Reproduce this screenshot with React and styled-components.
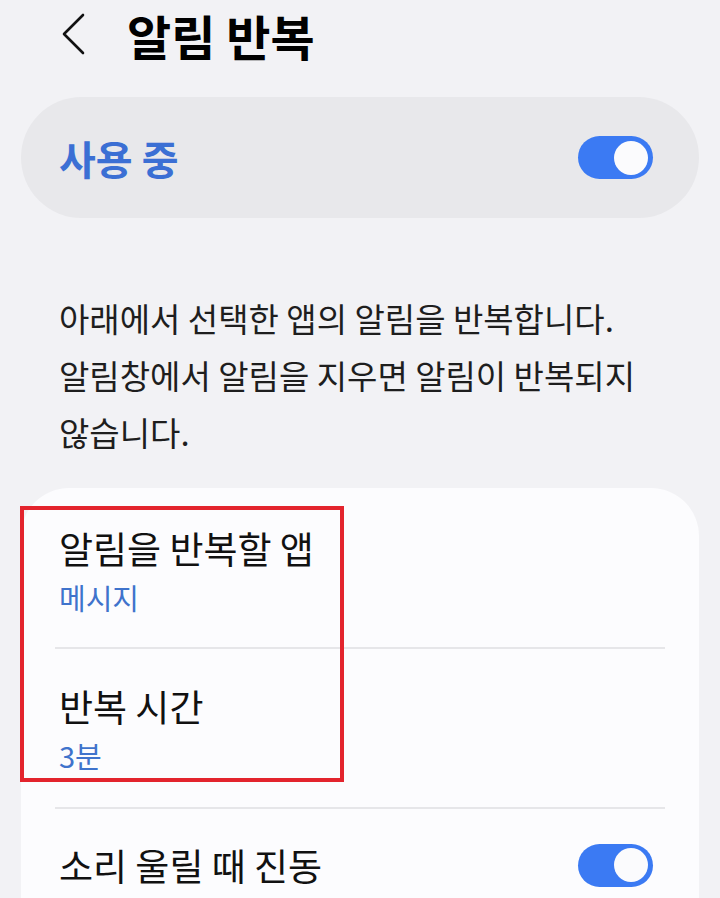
import React from "react"
import styled, { createGlobalStyle } from "styled-components"

const GlobalStyle = createGlobalStyle`
  html, body {
    margin: 0;
    padding: 0;
    background: #f2f2f5;
  }
  body {
    font-family: "Noto Sans CJK KR", "Noto Sans", sans-serif;
    color: #111;
    word-break: keep-all;
  }
`

const Page = styled.div`
  width: 720px;
  height: 898px;
  overflow: hidden;
  background: #f2f2f5;
`

const Header = styled.header`
  display: flex;
  align-items: center;
  height: 64px;
  padding: 3px 0 0 58px;
  gap: 37px;
`

const BackButton = styled.button`
  display: flex;
  align-items: center;
  justify-content: center;
  width: 32px;
  height: 44px;
  margin-top: -3px;
  padding: 0;
  border: 0;
  background: none;
  cursor: pointer;
`

const Title = styled.h1`
  margin: 0;
  font-size: 48px;
  font-weight: 700;
  line-height: 58px;
  color: #000;
`

const MasterSwitch = styled.div`
  display: flex;
  align-items: center;
  justify-content: space-between;
  height: 121px;
  margin: 30px 21px 0;
  padding: 0 46px 0 38px;
  border-radius: 61px;
  background: #e8e8eb;
`

const MasterLabel = styled.span`
  font-size: 40px;
  font-weight: 700;
  color: #3b6fd4;
  line-height: 1;
`

const Track = styled.span`
  display: flex;
  align-items: center;
  justify-content: ${(p) => (p.$on ? "flex-end" : "flex-start")};
  box-sizing: border-box;
  width: 75px;
  height: 43px;
  padding: 0 5px;
  border-radius: 22px;
  background: ${(p) => (p.$on ? "#3b7af3" : "#b9b9be")};
`

const Knob = styled.span`
  width: 34px;
  height: 34px;
  border-radius: 50%;
  background: #fbfbfd;
`

const Description = styled.p`
  margin: 72px 0 0;
  padding: 0 40px 0 59px;
  font-size: 33px;
  line-height: 57px;
  color: #1e1e1e;
`

const Card = styled.section`
  position: relative;
  margin: 27px 21px 0;
  border-radius: 48px 48px 0 0;
  background: #fcfcfe;
  padding-bottom: 40px;
`

const Item = styled.div`
  display: flex;
  align-items: center;
  justify-content: space-between;
  padding: ${(p) => p.$pad};
  margin: 0 34px;
  border-top: ${(p) => (p.$divider ? "2px solid #e6e6e9" : "none")};
`

const ItemText = styled.div`
  display: flex;
  flex-direction: column;
  gap: 9px;
  padding-left: 4px;
`

const ItemTitle = styled.span`
  font-size: 37px;
  line-height: 44px;
  color: #111;
`

const ItemValue = styled.span`
  font-size: 29px;
  line-height: 36px;
  color: #3f73cc;
`

const Highlight = styled.div`
  position: absolute;
  left: -1px;
  top: 18px;
  width: 324px;
  height: 276px;
  box-sizing: border-box;
  border: 4px solid #e3242d;
  pointer-events: none;
`

const Toggle = ({ on }) => (
  <Track $on={on}>
    <Knob />
  </Track>
)

const ChevronLeft = () => (
  <svg width="24" height="42" viewBox="0 0 24 42" fill="none">
    <polyline
      points="21,2 2,21 21,40"
      stroke="#111"
      strokeWidth="2.6"
      strokeLinecap="round"
      strokeLinejoin="round"
    />
  </svg>
)

export default function App() {
  return (
    <Page>
      <GlobalStyle />
      <Header>
        <BackButton aria-label="뒤로">
          <ChevronLeft />
        </BackButton>
        <Title>알림 반복</Title>
      </Header>

      <MasterSwitch>
        <MasterLabel>사용 중</MasterLabel>
        <Toggle on />
      </MasterSwitch>

      <Description>
        아래에서 선택한 앱의 알림을 반복합니다. 알림창에서 알림을 지우면
        알림이 반복되지 않습니다.
      </Description>

      <Card>
        <Item $pad="38px 0 32px">
          <ItemText>
            <ItemTitle>알림을 반복할 앱</ItemTitle>
            <ItemValue>메시지</ItemValue>
          </ItemText>
        </Item>
        <Item $divider $pad="35px 0 34px">
          <ItemText>
            <ItemTitle>반복 시간</ItemTitle>
            <ItemValue>3분</ItemValue>
          </ItemText>
        </Item>
        <Item $divider $pad="34px 12px 34px 0">
          <ItemText>
            <ItemTitle>소리 울릴 때 진동</ItemTitle>
          </ItemText>
          <Toggle on />
        </Item>
        <Highlight />
      </Card>
    </Page>
  )
}
